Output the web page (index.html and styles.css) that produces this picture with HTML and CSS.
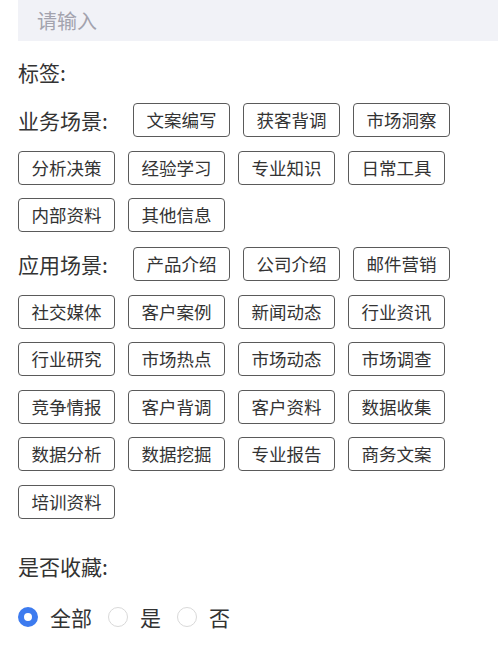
FILE: index.html
```html
<!DOCTYPE html>
<html lang="zh-CN">
<head>
    <meta charset="UTF-8">
    <meta name="viewport" content="width=device-width, initial-scale=1.0">
    <title>标签筛选</title>
    <link rel="stylesheet" href="styles.css">
</head>
<body>
    <div class="filter-panel">
        <input class="search-input" type="text" placeholder="请输入">

        <div class="field-title">标签:</div>

        <div class="tag-group">
            <div class="group-label">业务场景:</div>
            <span class="tag">文案编写</span>
            <span class="tag">获客背调</span>
            <span class="tag">市场洞察</span>
            <span class="tag">分析决策</span>
            <span class="tag">经验学习</span>
            <span class="tag">专业知识</span>
            <span class="tag">日常工具</span>
            <span class="tag">内部资料</span>
            <span class="tag">其他信息</span>
        </div>

        <div class="tag-group">
            <div class="group-label">应用场景:</div>
            <span class="tag">产品介绍</span>
            <span class="tag">公司介绍</span>
            <span class="tag">邮件营销</span>
            <span class="tag">社交媒体</span>
            <span class="tag">客户案例</span>
            <span class="tag">新闻动态</span>
            <span class="tag">行业资讯</span>
            <span class="tag">行业研究</span>
            <span class="tag">市场热点</span>
            <span class="tag">市场动态</span>
            <span class="tag">市场调查</span>
            <span class="tag">竞争情报</span>
            <span class="tag">客户背调</span>
            <span class="tag">客户资料</span>
            <span class="tag">数据收集</span>
            <span class="tag">数据分析</span>
            <span class="tag">数据挖掘</span>
            <span class="tag">专业报告</span>
            <span class="tag">商务文案</span>
            <span class="tag">培训资料</span>
        </div>

        <div class="field-title fav-title">是否收藏:</div>

        <div class="radio-group">
            <label class="radio checked"><span class="radio-dot"></span>全部</label>
            <label class="radio"><span class="radio-dot"></span>是</label>
            <label class="radio"><span class="radio-dot"></span>否</label>
        </div>
    </div>
</body>
</html>
```

FILE: styles.css
```css
body {
    margin: 0;
    background: #fff;
    font-family: "Noto Sans CJK SC", "Noto Sans", sans-serif;
    color: #333;
}
.filter-panel {
    padding: 0 2px 0 18px;
}
.search-input {
    display: block;
    width: 100%;
    height: 41px;
    box-sizing: border-box;
    border: none;
    outline: none;
    background: #f1f2f7;
    padding: 0 19px;
    font-family: inherit;
    font-size: 20px;
    color: #333;
}
.search-input::placeholder {
    color: #a3a3ae;
}
.field-title {
    font-size: 21px;
    line-height: 30px;
    margin-top: 16px;
    white-space: nowrap;
}
.tag-group {
    display: flex;
    flex-wrap: wrap;
    align-items: center;
    column-gap: 13px;
    row-gap: 13.5px;
    margin-top: 16px;
}
.tag-group + .tag-group {
    margin-top: 15px;
}
.group-label {
    width: 102px;
    font-size: 21px;
    line-height: 30px;
    white-space: nowrap;
}
.tag {
    box-sizing: border-box;
    height: 34px;
    line-height: 32px;
    padding: 0 12.5px;
    border: 1px solid #5a5a5a;
    border-radius: 4px;
    font-size: 17.5px;
    color: #333;
}
.fav-title {
    margin-top: 32px;
}
.radio-group {
    display: flex;
    align-items: center;
    margin-top: 21px;
    height: 30px;
}
.radio {
    display: flex;
    align-items: center;
    gap: 12px;
    margin-right: 16px;
    font-size: 21px;
    line-height: 30px;
}
.radio-dot {
    box-sizing: border-box;
    width: 20px;
    height: 20px;
    border-radius: 50%;
    border: 1px solid #d9d9d9;
    background: #fff;
}
.radio.checked .radio-dot {
    border: 6px solid #3d7bef;
}
```
